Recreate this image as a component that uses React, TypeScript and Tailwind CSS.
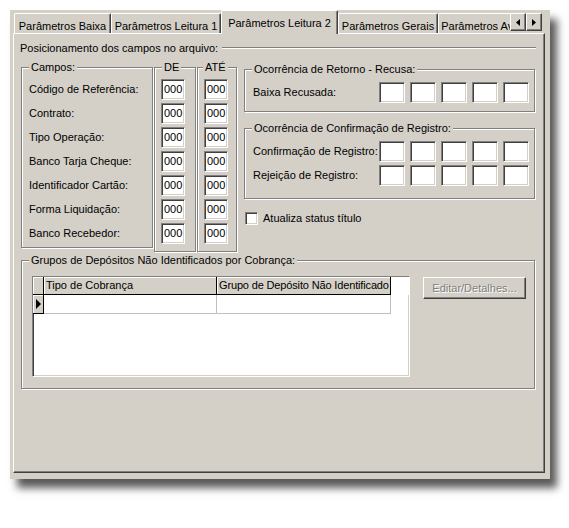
import React from 'react'

const sunken =
  'border border-t-[#808080] border-l-[#808080] border-r-white border-b-white shadow-[inset_1px_1px_0_#404040,inset_-1px_-1px_0_#d4d0c8] bg-white'
const raised =
  'border border-t-white border-l-white border-r-[#404040] border-b-[#404040] shadow-[inset_-1px_-1px_0_#808080]'
const etched = 'border border-[#808080] shadow-[inset_1px_1px_0_#fff,1px_1px_0_#fff]'

function Field({ value = '', w = 'w-[24px]' }: { value?: string; w?: string }) {
  return (
    <div className={`${sunken} ${w} h-[21px] flex items-center pl-[2px] leading-none`}>{value}</div>
  )
}

function Legend({ children }: { children: React.ReactNode }) {
  return (
    <span className="absolute left-[7px] -top-[7px] px-[2px] bg-[#d4d0c8] leading-[13px] whitespace-nowrap">
      {children}
    </span>
  )
}

function FiveFields() {
  return (
    <div className="ml-auto flex gap-[5px]">
      <Field w="w-[26px]" />
      <Field w="w-[26px]" />
      <Field w="w-[26px]" />
      <Field w="w-[26px]" />
      <Field w="w-[26px]" />
    </div>
  )
}

const campos = [
  'Código de Referência:',
  'Contrato:',
  'Tipo Operação:',
  'Banco Tarja Cheque:',
  'Identificador Cartão:',
  'Forma Liquidação:',
  'Banco Recebedor:',
]

const tabs = [
  { label: 'Parâmetros Baixa', w: 'w-[97px]' },
  { label: 'Parâmetros Leitura 1', w: 'w-[110px]' },
  { label: 'Parâmetros Leitura 2', w: 'w-[117px]', active: true },
  { label: 'Parâmetros Gerais', w: 'w-[100px]' },
  { label: 'Parâmetros Avançados', w: 'w-[120px]' },
]

export default function App() {
  return (
    <div className="min-h-[528px] bg-white pt-[10px] pl-[10px] font-['Liberation_Sans',Arial,sans-serif] text-[11px] text-black">
      <div className="w-[540px] h-[469px] bg-[#d4d0c8] flex flex-col shadow-[7px_9px_8px_rgba(0,0,0,0.65)]">
        {/* Tabs */}
        <div className="flex h-[24px] -mb-[1px] relative z-10 pl-[4px]">
          <div className="flex w-[496px] overflow-hidden items-start">
            {tabs.map((t) =>
              t.active ? (
                <div
                  key={t.label}
                  className={`${t.w} shrink-0 h-[24px] bg-[#d4d0c8] border-l border-t border-r border-l-white border-t-white border-r-[#404040] shadow-[inset_-1px_0_0_#808080] rounded-t-[2px] flex justify-center pt-[4px] whitespace-nowrap`}
                >
                  {t.label}
                </div>
              ) : (
                <div
                  key={t.label}
                  className={`${t.w} shrink-0 mt-[3px] h-[20px] border-l border-t border-r border-l-white border-t-white border-r-[#404040] shadow-[inset_-1px_0_0_#808080] rounded-t-[2px] flex justify-center pt-[4px] whitespace-nowrap`}
                >
                  {t.label}
                </div>
              )
            )}
          </div>
          <div className={`${raised} bg-[#d4d0c8] mt-[3px] w-[16px] h-[18px] flex items-center justify-center`}>
            <svg width="4" height="7" viewBox="0 0 4 7">
              <polygon points="4,0 4,7 0,3.5" fill="#000" />
            </svg>
          </div>
          <div className={`${raised} bg-[#d4d0c8] mt-[3px] w-[16px] h-[18px] flex items-center justify-center`}>
            <svg width="4" height="7" viewBox="0 0 4 7">
              <polygon points="0,0 0,7 4,3.5" fill="#000" />
            </svg>
          </div>
        </div>

        {/* Panel */}
        <div className="flex-1 ml-[3px] mr-[5px] mb-[6px] border border-t-white border-l-white border-r-[#404040] border-b-[#404040] shadow-[inset_-1px_-1px_0_#808080] pl-[6px] pr-[8px] pt-[7px]">
          <div className="h-[14px] flex items-center">
            <span className="whitespace-nowrap">Posicionamento dos campos no arquivo:</span>
            <div className="flex-1 ml-[4px] border-t border-b border-t-[#808080] border-b-white" />
          </div>

          <div className="flex mt-[12px] ml-[1px]">
            {/* Campos */}
            <div className={`${etched} relative w-[132px] h-[181px] pt-[11px] pl-[7px] flex flex-col gap-[3px]`}>
              <Legend>Campos:</Legend>
              {campos.map((c) => (
                <div key={c} className="h-[21px] flex items-center whitespace-nowrap">
                  {c}
                </div>
              ))}
            </div>
            <div className={`${etched} relative ml-[1px] w-[42px] h-[185px] pt-[11px] pl-[6px] flex flex-col gap-[3px]`}>
              <Legend>DE</Legend>
              {campos.map((c) => (
                <Field key={c} value="000" />
              ))}
            </div>
            <div className={`${etched} relative ml-[1px] w-[40px] h-[185px] pt-[11px] pl-[6px] flex flex-col gap-[3px]`}>
              <span className="absolute left-[5px] -top-[7px] px-[2px] bg-[#d4d0c8] leading-[13px] whitespace-nowrap">
                ATÉ
              </span>
              {campos.map((c) => (
                <Field key={c} value="000" />
              ))}
            </div>

            {/* Right column */}
            <div className="ml-[7px] w-[291px] flex flex-col">
              <div className={`${etched} relative mt-[2px] h-[43px] pt-[12px] pl-[8px] pr-[5px]`}>
                <Legend>Ocorrência de Retorno - Recusa:</Legend>
                <div className="flex items-center h-[21px]">
                  <span className="whitespace-nowrap">Baixa Recusada:</span>
                  <FiveFields />
                </div>
              </div>
              <div className={`${etched} relative mt-[16px] h-[71px] pt-[12px] pl-[8px] pr-[5px] flex flex-col gap-[3px]`}>
                <Legend>Ocorrência de Confirmação de Registro:</Legend>
                <div className="flex items-center h-[21px]">
                  <span className="whitespace-nowrap">Confirmação de Registro:</span>
                  <FiveFields />
                </div>
                <div className="flex items-center h-[21px]">
                  <span className="whitespace-nowrap">Rejeição de Registro:</span>
                  <FiveFields />
                </div>
              </div>
              <div className="mt-[11px] ml-[1px] flex items-center">
                <div className={`${sunken} w-[13px] h-[13px]`} />
                <span className="ml-[5px]">Atualiza status título</span>
              </div>
            </div>
          </div>

          {/* Grupos */}
          <div className={`${etched} relative mt-[8px] ml-[1px] w-[514px] h-[129px] pt-[15px] pl-[10px] flex items-start`}>
            <Legend>Grupos de Depósitos Não Identificados por Cobrança:</Legend>
            <div className={`${sunken} w-[378px] h-[101px]`}>
              <div className="flex h-[18px] bg-white">
                <div className="w-[11px] bg-[#d4d0c8] border-r border-b border-black shadow-[inset_1px_1px_0_#fff]" />
                <div className="w-[173px] bg-[#d4d0c8] border-r border-b border-black shadow-[inset_1px_1px_0_#fff] pl-[2px] flex items-center whitespace-nowrap">
                  Tipo de Cobrança
                </div>
                <div className="w-[174px] bg-[#d4d0c8] border-r border-b border-black shadow-[inset_1px_1px_0_#fff] pl-[2px] flex items-center whitespace-nowrap overflow-hidden tracking-[-0.15px]">
                  Grupo de Depósito Não Identificado
                </div>
              </div>
              <div className="flex h-[19px]">
                <div className="w-[11px] bg-[#d4d0c8] border-r border-b border-black shadow-[inset_1px_1px_0_#fff] flex items-center justify-center">
                  <svg width="5" height="10" viewBox="0 0 5 10">
                    <polygon points="0,0 0,10 5,5" fill="#000" />
                  </svg>
                </div>
                <div className="w-[173px] border-r border-b border-[#c0c0c0]" />
                <div className="w-[174px] border-r border-b border-[#c0c0c0]" />
              </div>
            </div>
            <div
              className={`${raised} ml-[13px] mt-[1px] w-[103px] h-[22px] flex items-center justify-center text-[#808080] [text-shadow:1px_1px_0_#fff] whitespace-nowrap`}
            >
              Editar/Detalhes...
            </div>
          </div>
        </div>
      </div>
    </div>
  )
}
